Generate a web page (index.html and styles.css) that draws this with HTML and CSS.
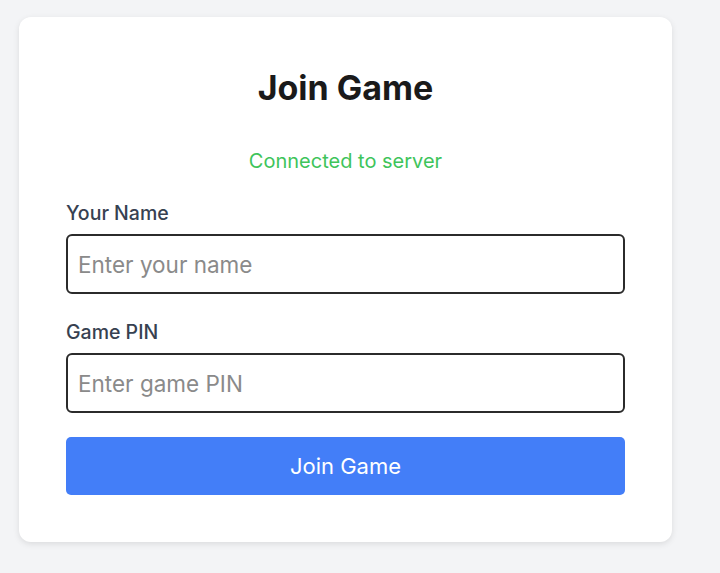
FILE: index.html
```html
<!DOCTYPE html>
<html lang="en">
<head>
    <meta charset="UTF-8">
    <meta name="viewport" content="width=device-width, initial-scale=1.0">
    <title>Join Game</title>
    <link rel="stylesheet" href="styles.css">
</head>
<body>
    <div class="card">
        <h1 class="title">Join Game</h1>
        <div class="status">Connected to server</div>
        <div class="field">
            <label for="player-name">Your Name</label>
            <input type="text" id="player-name" placeholder="Enter your name">
        </div>
        <div class="field">
            <label for="game-pin">Game PIN</label>
            <input type="text" id="game-pin" placeholder="Enter game PIN">
        </div>
        <button class="join-button">Join Game</button>
    </div>
</body>
</html>
```

FILE: styles.css
```css
body {
    font-family: Inter, "Noto Sans", sans-serif;
    background-color: #f3f4f6;
    margin: 0;
    padding: 17px 19px;
}
.card {
    width: 653px;
    box-sizing: border-box;
    background-color: #fff;
    border-radius: 12px;
    box-shadow: 0 2px 6px rgba(0, 0, 0, 0.1);
    padding: 47px;
}
.title {
    margin: 0;
    text-align: center;
    font-size: 34px;
    line-height: 48px;
    font-weight: 700;
    color: #1a1a1a;
}
.status {
    margin-top: 35px;
    text-align: center;
    color: #3ec45b;
    font-size: 20px;
    line-height: 28px;
}
.field {
    margin-top: 25px;
}
.field + .field {
    margin-top: 25px;
}
.field label {
    display: block;
    font-size: 19.5px;
    line-height: 26px;
    font-weight: 500;
    color: #374151;
    margin-bottom: 8px;
}
.field input {
    display: block;
    width: 100%;
    box-sizing: border-box;
    height: 60px;
    padding: 0 10px;
    border: 2px solid #2b2b2b;
    border-radius: 6px;
    font-family: inherit;
    font-size: 22.5px;
    color: #1a1a1a;
}
.field input::placeholder {
    color: #8a8a8a;
}
.join-button {
    display: block;
    width: 100%;
    height: 58px;
    margin-top: 24px;
    border: none;
    border-radius: 5px;
    background-color: #437ef8;
    color: #fff;
    font-family: inherit;
    font-size: 22px;
    cursor: pointer;
}
```
